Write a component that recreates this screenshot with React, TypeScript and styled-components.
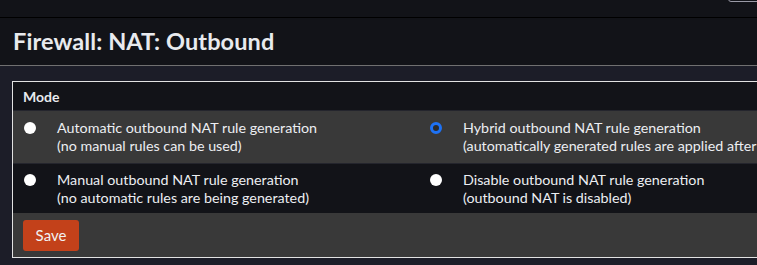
import React from "react";
import styled, { createGlobalStyle } from "styled-components";

const Global = createGlobalStyle`
  html, body { margin: 0; padding: 0; background: #1c1d28; overflow: hidden; }
  body { font-family: Lato, "Noto Sans", sans-serif; color: #e6e6e6; }
  * { box-sizing: border-box; }
`;

const Page = styled.div`
  width: 757px;
  height: 265px;
  overflow: hidden;
  background: #1c1d28;
`;

const TopBar = styled.div`
  height: 18px;
  background: #121318;
  border-bottom: 1px solid #000;
  display: flex;
  justify-content: flex-end;
  overflow: hidden;
`;

const SearchBox = styled.div`
  width: 40px;
  height: 22px;
  margin-top: -20px;
  margin-right: -11px;
  border: 1px solid #9a9aa6;
  border-radius: 3px;
`;

const Header = styled.div`
  height: 48px;
  background: #121318;
  border-bottom: 1px solid #707070;
  display: flex;
  align-items: center;
  padding-left: 13px;
  padding-bottom: 1px;
`;

const Title = styled.h1`
  margin: 0;
  font-size: 23.5px;
  font-weight: 700;
  color: #e8eaee;
  letter-spacing: 0.1px;
`;

const Content = styled.div`
  padding: 15px 0 0 12px;
`;

const Panel = styled.div`
  width: 824px;
  border: 1px solid #e2e2e2;
  background: #121318;
`;

const PanelHeading = styled.div`
  height: 28px;
  display: flex;
  align-items: center;
  padding-left: 10px;
  font-size: 14px;
  font-weight: 700;
  color: #e8eaee;
  background: #121318;
`;

const Row = styled.div<{ $shade: boolean }>`
  display: grid;
  grid-template-columns: 406px 406px;
  height: ${(p) => (p.$shade ? "53px" : "50px")};
  align-items: center;
  background: ${(p) => (p.$shade ? "#393939" : "#121318")};
  border-top: 1px solid #24252d;
`;

const Option = styled.label`
  display: flex;
  align-items: flex-start;
  font-size: 14.3px;
  line-height: 18px;
  color: #eceef2;
  min-width: 0;
`;

const RadioCell = styled.span`
  flex: 0 0 44px;
  display: flex;
  padding-left: 11px;
  padding-top: 3px;
`;

const Radio = styled.span<{ $checked: boolean }>`
  flex: 0 0 12px;
  width: 12px;
  height: 12px;
  border-radius: 50%;
  background: ${(p) => (p.$checked ? "#2b2b2b" : "#ffffff")};
  border: ${(p) => (p.$checked ? "3px solid #1e72f5" : "none")};
`;

const Text = styled.span`
  display: flex;
  flex-direction: column;
  white-space: nowrap;
`;

const Footer = styled.div`
  height: 44px;
  background: #393939;
  display: flex;
  align-items: center;
  padding-left: 10px;
`;

const SaveButton = styled.button`
  height: 31px;
  width: 56px;
  border: none;
  border-radius: 3px;
  background: #c3411a;
  color: #f2f2f2;
  font-family: Lato, "Noto Sans", sans-serif;
  font-size: 15px;
  padding: 0;
`;

type Opt = { title: string; sub: string; checked?: boolean };

const rows: Opt[][] = [
  [
    { title: "Automatic outbound NAT rule generation", sub: "(no manual rules can be used)" },
    {
      title: "Hybrid outbound NAT rule generation",
      sub: "(automatically generated rules are applied after manual rules)",
      checked: true,
    },
  ],
  [
    { title: "Manual outbound NAT rule generation", sub: "(no automatic rules are being generated)" },
    { title: "Disable outbound NAT rule generation", sub: "(outbound NAT is disabled)" },
  ],
];

export default function App() {
  return (
    <Page>
      <Global />
      <TopBar>
        <SearchBox />
      </TopBar>
      <Header>
        <Title>Firewall: NAT: Outbound</Title>
      </Header>
      <Content>
        <Panel>
          <PanelHeading>Mode</PanelHeading>
          {rows.map((r, i) => (
            <Row key={i} $shade={i === 0}>
              {r.map((o) => (
                <Option key={o.title}>
                  <RadioCell>
                    <Radio $checked={!!o.checked} />
                  </RadioCell>
                  <Text>
                    <span>{o.title}</span>
                    <span>{o.sub}</span>
                  </Text>
                </Option>
              ))}
            </Row>
          ))}
          <Footer>
            <SaveButton>Save</SaveButton>
          </Footer>
        </Panel>
      </Content>
    </Page>
  );
}
